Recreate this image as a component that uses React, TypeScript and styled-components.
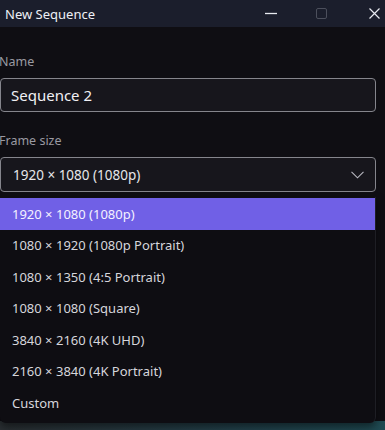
import React from "react";
import styled, { createGlobalStyle } from "styled-components";

const GlobalStyle = createGlobalStyle`
  html, body {
    margin: 0;
    padding: 0;
    background: #0f0e13;
  }
  body {
    font-family: "Noto Sans", "Open Sans", sans-serif;
  }
`;

const Desktop = styled.div`
  position: relative;
  width: 385px;
  height: 430px;
  overflow: hidden;
  background: linear-gradient(90deg, #2a2f33 0%, #22404a 60%, #1f4a52 100%);
`;

const Window = styled.div`
  display: flex;
  flex-direction: column;
  width: 385px;
  height: 421px;
  background: #0f0e13;
`;

const TitleBar = styled.div`
  display: flex;
  align-items: center;
  height: 27px;
  flex-shrink: 0;
  background: #1b1e2c;
  padding: 0 5px;
`;

const Title = styled.div`
  flex: 1;
  color: #eef0f6;
  font-size: 13px;
`;

const CaptionButton = styled.div<{ $gap: number; $dim?: boolean }>`
  display: flex;
  align-items: center;
  justify-content: center;
  margin-left: ${(p) => p.$gap}px;
  height: 27px;
  color: ${(p) => (p.$dim ? "#4c4f5c" : "#e8eaf0")};
`;

const Body = styled.div`
  display: flex;
  flex-direction: column;
  padding: 26px 9px 0 0;
`;

const Label = styled.div<{ $gap?: number }>`
  color: #9a9aa2;
  font-size: 12.5px;
  line-height: 18px;
  margin-left: -1px;
  margin-top: ${(p) => p.$gap ?? 0}px;
  margin-bottom: 7px;
`;

const TextBox = styled.div`
  display: flex;
  align-items: center;
  height: 34px;
  box-sizing: border-box;
  border: 1px solid #85858c;
  border-radius: 4px;
  background: #17161c;
  padding-left: 10px;
  color: #f0f0f4;
  font-size: 15px;
`;

const SelectWrap = styled.div`
  position: relative;
`;

const SelectBox = styled(TextBox)`
  height: 35px;
  justify-content: space-between;
  padding: 0 11px 0 12px;
  font-size: 13.5px;
  color: #e6e6ea;
`;

const Menu = styled.div`
  position: absolute;
  top: 40px;
  left: 0;
  right: 0;
  display: flex;
  flex-direction: column;
  padding: 1px 0 4px;
  background: #0e0d12;
  border-right: 1px solid #1e1e24;
  border-radius: 0 0 6px 6px;
  box-shadow: 0 4px 8px rgba(0, 0, 0, 0.5);
`;

const Option = styled.div<{ $selected?: boolean }>`
  display: flex;
  align-items: center;
  height: 31.5px;
  padding-left: 12px;
  font-size: 13px;
  color: ${(p) => (p.$selected ? "#f4f2ff" : "#d6d6dc")};
  background: ${(p) => (p.$selected ? "#7060e6" : "transparent")};
`;

const options = [
  "1920 × 1080 (1080p)",
  "1080 × 1920 (1080p Portrait)",
  "1080 × 1350 (4:5 Portrait)",
  "1080 × 1080 (Square)",
  "3840 × 2160 (4K UHD)",
  "2160 × 3840 (4K Portrait)",
  "Custom",
];

export default function App() {
  return (
    <>
      <GlobalStyle />
      <Desktop>
        <Window>
          <TitleBar>
            <Title>New Sequence</Title>
            <CaptionButton $gap={0}>
              <svg width="12" height="11" viewBox="0 0 12 11">
                <path d="M0 5.5h12" stroke="currentColor" strokeWidth="1.3" />
              </svg>
            </CaptionButton>
            <CaptionButton $gap={39} $dim>
              <svg width="11" height="11" viewBox="0 0 11 11">
                <rect x="0.5" y="0.5" width="10" height="10" rx="1.5" fill="none" stroke="currentColor" />
              </svg>
            </CaptionButton>
            <CaptionButton $gap={42}>
              <svg width="11" height="11" viewBox="0 0 11 11">
                <path d="M0.5 0.5l10 10M10.5 0.5l-10 10" stroke="currentColor" strokeWidth="1.2" />
              </svg>
            </CaptionButton>
          </TitleBar>
          <Body>
            <Label>Name</Label>
            <TextBox>Sequence 2</TextBox>
            <Label $gap={20}>Frame size</Label>
            <SelectWrap>
              <SelectBox>
                <span>1920 × 1080 (1080p)</span>
                <svg width="13" height="8" viewBox="0 0 13 8">
                  <path d="M0.5 0.8l6 6 6-6" fill="none" stroke="#b8b8c0" strokeWidth="1.1" />
                </svg>
              </SelectBox>
              <Menu>
                {options.map((o, i) => (
                  <Option key={o} $selected={i === 0}>
                    {o}
                  </Option>
                ))}
              </Menu>
            </SelectWrap>
          </Body>
        </Window>
      </Desktop>
    </>
  );
}
